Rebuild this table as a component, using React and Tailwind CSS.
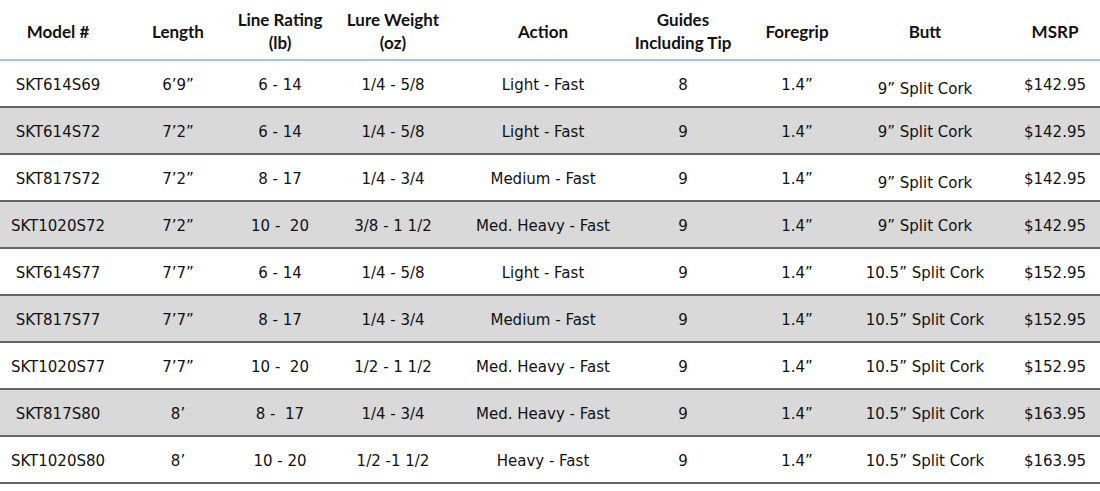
const columns = [
  { label: ['Model #'], w: 'w-[116px]' },
  { label: ['Length'], w: 'w-[124px]' },
  { label: ['Line Rating', '(lb)'], w: 'w-[80px]' },
  { label: ['Lure Weight', '(oz)'], w: 'w-[146px]' },
  { label: ['Action'], w: 'w-[154px]' },
  { label: ['Guides', 'Including Tip'], w: 'w-[126px]' },
  { label: ['Foregrip'], w: 'w-[102px]' },
  { label: ['Butt'], w: 'w-[154px]' },
  { label: ['MSRP'], w: 'w-[98px] pl-2' },
];

const rows = [
  ['SKT614S69', '6’9”', '6 - 14', '1/4 - 5/8', 'Light - Fast', '8', '1.4”', '9” Split Cork', '$142.95'],
  ['SKT614S72', '7’2”', '6 - 14', '1/4 - 5/8', 'Light - Fast', '9', '1.4”', '9” Split Cork', '$142.95'],
  ['SKT817S72', '7’2”', '8 - 17', '1/4 - 3/4', 'Medium - Fast', '9', '1.4”', '9” Split Cork', '$142.95'],
  ['SKT1020S72', '7’2”', '10 -  20', '3/8 - 1 1/2', 'Med. Heavy - Fast', '9', '1.4”', '9” Split Cork', '$142.95'],
  ['SKT614S77', '7’7”', '6 - 14', '1/4 - 5/8', 'Light - Fast', '9', '1.4”', '10.5” Split Cork', '$152.95'],
  ['SKT817S77', '7’7”', '8 - 17', '1/4 - 3/4', 'Medium - Fast', '9', '1.4”', '10.5” Split Cork', '$152.95'],
  ['SKT1020S77', '7’7”', '10 -  20', '1/2 - 1 1/2', 'Med. Heavy - Fast', '9', '1.4”', '10.5” Split Cork', '$152.95'],
  ['SKT817S80', '8’', '8 -  17', '1/4 - 3/4', 'Med. Heavy - Fast', '9', '1.4”', '10.5” Split Cork', '$163.95'],
  ['SKT1020S80', '8’', '10 - 20', '1/2 -1 1/2', 'Heavy - Fast', '9', '1.4”', '10.5” Split Cork', '$163.95'],
];

const HeaderRow = () => (
  <div className="flex h-[61px] border-b-2 border-[#a9bfdc] pt-[3px] font-['Lato',sans-serif] text-[17px] font-bold leading-[23px] text-[#111]">
    {columns.map((col) => (
      <div key={col.label.join()} className={`${col.w} flex flex-col items-center justify-center whitespace-nowrap`}>
        {col.label.map((line) => (
          <span key={line}>{line}</span>
        ))}
      </div>
    ))}
  </div>
);

const DataRow = ({ cells, shaded, index }) => (
  <div
    className={`flex h-[47px] border-b-2 border-[#666] pt-[3px] ${shaded ? 'bg-[#d9d9d9]' : 'bg-white'}`}
  >
    {cells.map((value, i) => (
      <div
        key={i}
        className={`${columns[i].w} flex items-center justify-center whitespace-pre ${
          i === 7 && (index === 0 || index === 2) ? 'pt-2' : ''
        }`}
      >
        {value}
      </div>
    ))}
  </div>
);

export default function App() {
  return (
    <div className="h-[491px] w-[1100px] bg-white font-['DejaVu_Sans',sans-serif] text-[15px] text-[#111]">
      <HeaderRow />
      {rows.map((cells, i) => (
        <DataRow key={cells[0]} cells={cells} shaded={i % 2 === 1} index={i} />
      ))}
    </div>
  );
}
